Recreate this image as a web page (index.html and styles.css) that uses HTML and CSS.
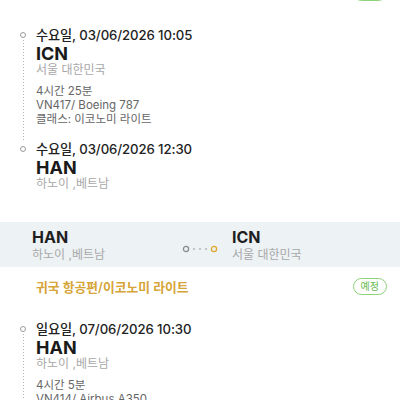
FILE: index.html
```html
<html>
<head>
  <meta charset="utf-8" />
  <title>여정 상세</title>
  <link rel="stylesheet" href="styles.css">
</head>
<body>
  <main class="page">
    <section class="leg leg-out">
      <div class="leg-head">
        <span class="leg-title">가는 항공편/이코노미 라이트</span>
        <span class="status">예정</span>
      </div>
      <div class="timeline">
        <div class="stop">
          <div class="rail"><span class="dot"></span><span class="line"></span></div>
          <div class="info">
            <div class="when">수요일, 03/06/2026 10:05</div>
            <div class="code">ICN</div>
            <div class="city">서울 대한민국</div>
            <div class="details">
              <p>4시간 25분</p>
              <p>VN417/ Boeing 787</p>
              <p>클래스: 이코노미 라이트</p>
            </div>
          </div>
        </div>
        <div class="stop last">
          <div class="rail"><span class="dot"></span></div>
          <div class="info">
            <div class="when">수요일, 03/06/2026 12:30</div>
            <div class="code">HAN</div>
            <div class="city">하노이 ,베트남</div>
          </div>
        </div>
      </div>
    </section>

    <section class="route">
      <div class="route-city">
        <div class="route-code">HAN</div>
        <div class="route-place">하노이 ,베트남</div>
      </div>
      <div class="route-link">
        <svg width="36" height="8" viewBox="0 0 36 8">
          <circle cx="4" cy="4" r="2.6" fill="none" stroke="#8a8a8a" stroke-width="1.3"/>
          <circle cx="12" cy="4" r="0.8" fill="#8a8a8a"/>
          <circle cx="18" cy="4" r="0.8" fill="#8a8a8a"/>
          <circle cx="24" cy="4" r="0.8" fill="#8a8a8a"/>
          <circle cx="32" cy="4" r="2.6" fill="none" stroke="#e0a82e" stroke-width="1.3"/>
        </svg>
      </div>
      <div class="route-city to">
        <div class="route-code">ICN</div>
        <div class="route-place">서울 대한민국</div>
      </div>
    </section>

    <section class="leg">
      <div class="leg-head">
        <span class="leg-title">귀국 항공편/이코노미 라이트</span>
        <span class="status">예정</span>
      </div>
      <div class="timeline">
        <div class="stop">
          <div class="rail"><span class="dot"></span><span class="line"></span></div>
          <div class="info">
            <div class="when">일요일, 07/06/2026 10:30</div>
            <div class="code">HAN</div>
            <div class="city">하노이 ,베트남</div>
            <div class="details">
              <p>4시간 5분</p>
              <p>VN414/ Airbus A350</p>
              <p>클래스: 이코노미 라이트</p>
            </div>
          </div>
        </div>
        <div class="stop last">
          <div class="rail"><span class="dot"></span></div>
          <div class="info">
            <div class="when">일요일, 07/06/2026 18:35</div>
            <div class="code">ICN</div>
            <div class="city">서울 대한민국</div>
          </div>
        </div>
      </div>
    </section>
  </main>
</body>
</html>
```

FILE: styles.css
```css
body {
  background-color: #fff;
  color: #222;
  font-family: Inter, "Liberation Sans", "Noto Sans CJK KR", sans-serif;
  margin: 0;
  padding: 0;
}

.page {
  margin-top: -27px;
}

.leg {
  padding-top: 10px;
}
.leg-out {
  padding-bottom: 31px;
}

.leg-head {
  align-items: center;
  display: flex;
  height: 18px;
  justify-content: space-between;
  padding: 0 13px 0 36px;
}
.leg-title {
  color: #d6a537;
  font-size: 12.8px;
  font-weight: 600;
}
.status {
  border: 1.5px solid #8ed27a;
  border-radius: 9px;
  box-sizing: border-box;
  color: #67bb52;
  font-size: 10px;
  height: 17px;
  line-height: 14px;
  padding: 0 7px;
}

.timeline {
  padding: 25px 0 0 14px;
}
.stop {
  display: flex;
  gap: 4px;
}
.stop:not(.last) {
  padding-bottom: 14px;
}
.rail {
  align-items: center;
  display: flex;
  flex-direction: column;
  width: 18px;
}
.stop:not(.last) .rail {
  margin-bottom: -14px;
}
.dot {
  border: 1.2px solid #9a9a9a;
  border-radius: 50%;
  box-sizing: border-box;
  height: 6px;
  margin-top: 6px;
  width: 6px;
}
.line {
  background-image: linear-gradient(#b4b4b4 50%, transparent 50%);
  background-size: 1px 3px;
  flex: 1;
  margin-top: 2px;
  width: 1px;
}

.when {
  color: #222;
  font-size: 13.2px;
  font-weight: 500;
  letter-spacing: -0.1px;
  line-height: 18px;
}
.code {
  color: #1a1a1a;
  font-size: 18px;
  font-weight: 700;
  line-height: 19px;
}
.city {
  color: #a8a8a8;
  font-size: 12px;
  line-height: 14px;
}
.details {
  color: #666;
  font-size: 11.5px;
  line-height: 14px;
  margin-top: 7px;
}
.details p {
  margin: 0;
}

.route {
  background-color: #edf2f5;
  display: grid;
  grid-template-columns: 150px 36px 1fr;
  padding: 6px 32px 5px;
}
.route-code {
  color: #1f1f1f;
  font-size: 16px;
  font-weight: 700;
  line-height: 19px;
}
.route-place {
  color: #a8a8a8;
  font-size: 12px;
  line-height: 15px;
}
.route-link {
  align-items: center;
  display: flex;
  padding-top: 7px;
}
.route-link svg {
  display: block;
}
.route-city.to {
  padding-left: 14px;
}
```
